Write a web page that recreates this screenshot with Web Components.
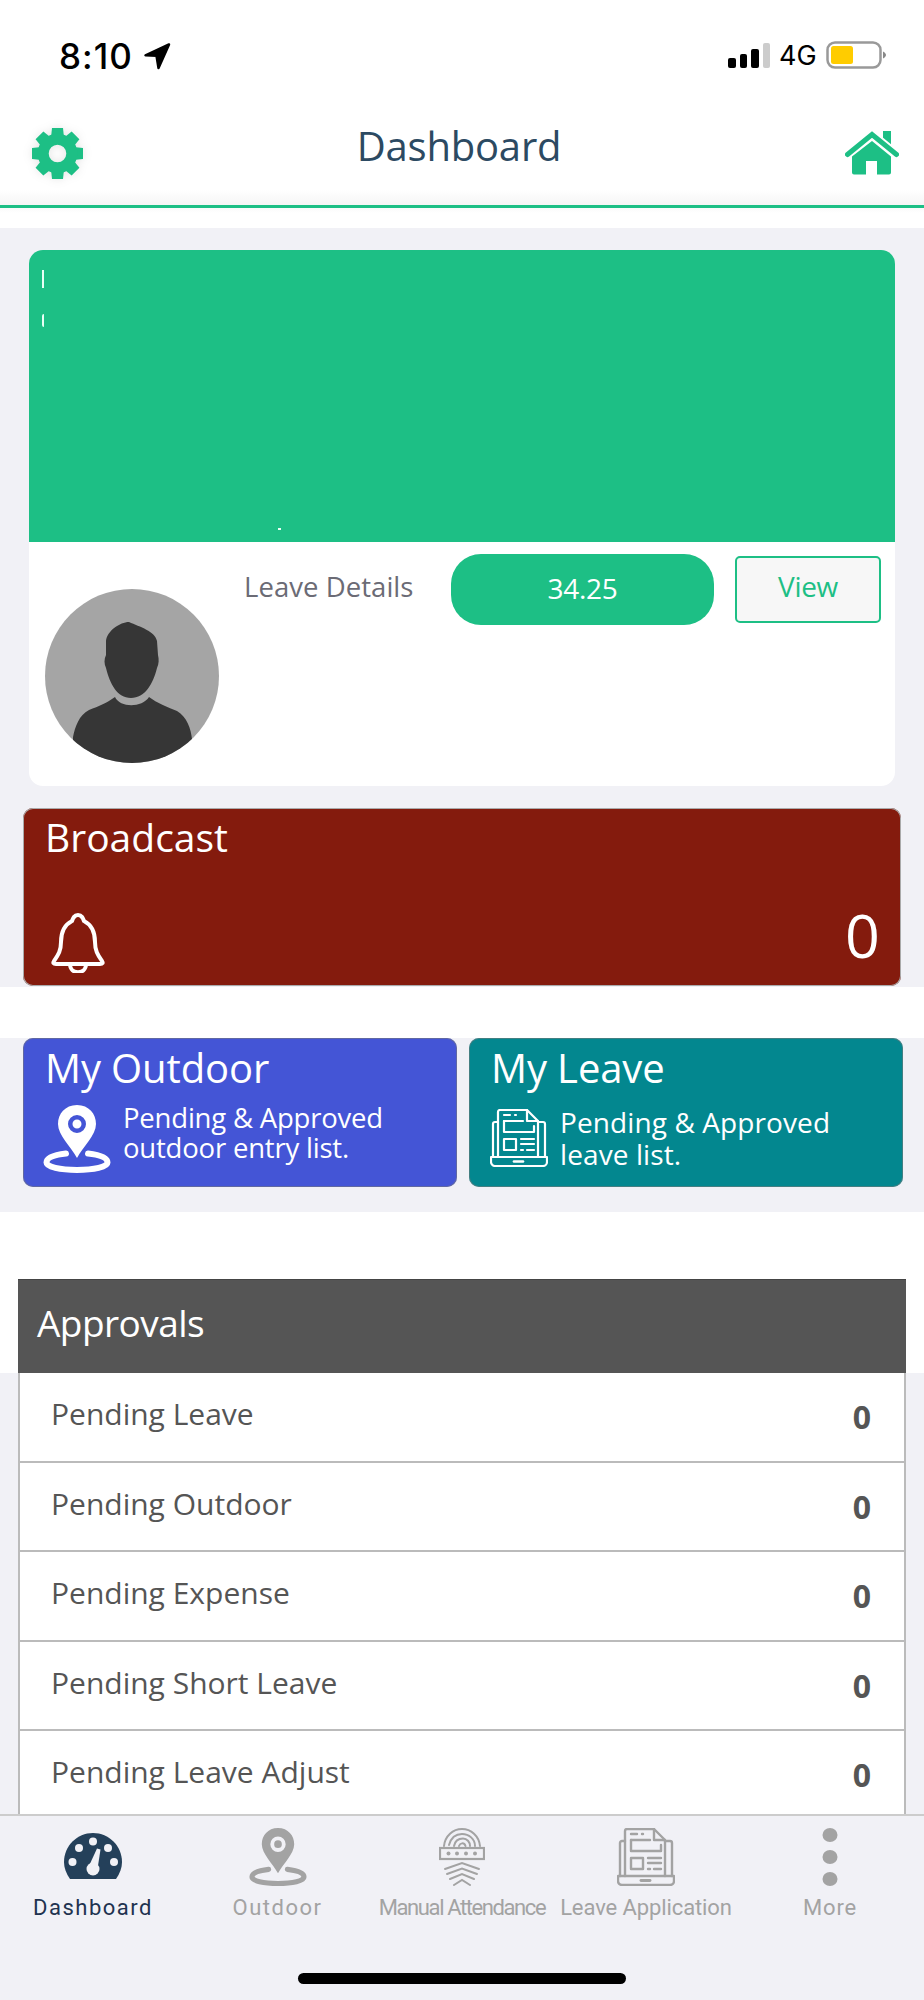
<!DOCTYPE html>
<html lang="en"><head><meta charset="utf-8"><title>Dashboard</title>
<style>
html,body{margin:0;padding:0;background:#fff}
body{width:924px;height:2000px;overflow:hidden;font-family:"Open Sans","Liberation Sans",sans-serif}
dash-screen{--green:#1dbf85;--lav:#f1f1f6}
</style></head><body>
<dash-screen>
  <status-bar slot="top" time="8:10" net="4G"></status-bar>
  <app-header slot="top" title="Dashboard"></app-header>
  <profile-card slot="first" leave="34.25"></profile-card>
  <broadcast-card slot="first" count="0"></broadcast-card>
  <quick-card slot="quick" kind="outdoor" heading="My Outdoor">Pending &amp; Approved<br>outdoor entry list.</quick-card>
  <quick-card slot="quick" kind="leave" heading="My Leave">Pending &amp; Approved<br>leave list.</quick-card>
  <approvals-list slot="approvals" heading="Approvals">
    <approval-row label="Pending Leave" value="0"></approval-row>
    <approval-row label="Pending Outdoor" value="0"></approval-row>
    <approval-row label="Pending Expense" value="0"></approval-row>
    <approval-row label="Pending Short Leave" value="0"></approval-row>
    <approval-row label="Pending Leave Adjust" value="0"></approval-row>
  </approvals-list>
  <tab-bar slot="tabs"></tab-bar>
</dash-screen>
<script>
const ICONS = {
  pin:(c)=>`<svg viewBox="0 0 68 68" width="100%" height="100%" fill="none"><path fill="${c}" fill-rule="evenodd" d="M34 0C22 0 15 9 15 19C15 30 28 42 34 53C40 42 53 30 53 19C53 9 46 0 34 0ZM34 10A9 9 0 1 1 34 28A9 9 0 1 1 34 10ZM34 14.5A4.5 4.5 0 1 0 34 23.5A4.5 4.5 0 1 0 34 14.5Z"/><path stroke="${c}" stroke-width="6" stroke-linecap="round" d="M23 48.5C10 50 3.5 53 3.5 57.5C3.5 62 17 65 34 65C51 65 64.5 62 64.5 57.5C64.5 53 58 50 45 48.5"/></svg>`,
  doc:(c,w=2.2)=>`<svg viewBox="0 0 58 58" width="100%" height="100%" fill="none" stroke="${c}" stroke-width="${w}" stroke-linejoin="round" stroke-linecap="round"><path d="M8 48V3a2 2 0 0 1 2-2H37L48 12V48"/><path d="M37 1V12H48"/><path d="M8 13H5a2 2 0 0 0-2 2V48M48 13H53a2 2 0 0 1 2 2V48"/><path d="M1 48H57V53a4 4 0 0 1-4 4H5a4 4 0 0 1-4-4Z"/><path d="M24 52.5H33" stroke-width="${w*1.2}"/><path d="M14 6H20M25 6H26"/><path d="M14 12V23H44V17"/><path d="M14 12H33"/><rect x="14" y="30" width="12" height="11"/><path d="M31 30H44M31 35H44M31 41H33M37 41H44"/></svg>`
};
function def(name, render){
  customElements.define(name, class extends HTMLElement{
    constructor(){super();this.attachShadow({mode:'open'});}
    connectedCallback(){this.shadowRoot.innerHTML=render(this);}
  });
}
def('dash-screen',()=>`<style>
:host{display:flex;flex-direction:column;width:924px;height:2000px;background:#fff;overflow:hidden}
main{flex:1;min-height:0;overflow:hidden;display:flex;flex-direction:column}
.first{background:var(--lav);padding:22px 0 1px;display:flex;flex-direction:column;gap:22px;margin-bottom:51px}
.quick{background:var(--lav);padding:0 20px 25px 23px;display:grid;grid-template-columns:434px 434px;gap:12px;margin-bottom:67px}
.appr{background:linear-gradient(#fff 0,#fff 94px,var(--lav) 94px);flex:1;padding:0 18px 0 18px}
</style><slot name="top"></slot><main><div class="first"><slot name="first"></slot></div><div class="quick"><slot name="quick"></slot></div><div class="appr"><slot name="approvals"></slot></div></main><slot name="tabs"></slot>`);

def('status-bar',el=>`<style>
:host{display:flex;height:90px;box-sizing:border-box;padding:0 38px 0 59px;align-items:flex-start;justify-content:space-between;background:#fff;color:#000}
.l,.r{display:flex;align-items:flex-start}
.t{font:500 35px/38px Inter,sans-serif;margin-top:37px;letter-spacing:1px;width:83px}
.arrow{margin-top:41px}
.bars{display:flex;align-items:flex-end;gap:4px;height:25px;margin-top:43px}
.bars i{display:block;width:7.5px;border-radius:2px;background:#000}
.n{font:400 27px/32px Inter,sans-serif;margin:40px 0 0 9px;width:47px}
.bat{margin-top:41px}
</style><div class="l"><span class="t">${el.getAttribute('time')}</span>
<svg class="arrow" width="30" height="30" viewBox="0 0 30 30"><path d="M27 3.5L3.5 14.3L14.5 14.7L16.5 27Z" fill="#000" stroke="#000" stroke-width="2.5" stroke-linejoin="round"/></svg></div>
<div class="r"><div class="bars"><i style="height:10px"></i><i style="height:14px"></i><i style="height:19px"></i><i style="height:25px;background:#ccc"></i></div><span class="n">${el.getAttribute('net')}</span>
<svg class="bat" width="60" height="28" viewBox="0 0 60 28"><rect x="1.5" y="1.5" width="53" height="25" rx="7.5" fill="none" stroke="#999" stroke-width="2.5"/><rect x="5" y="5" width="22" height="18" rx="2.5" fill="#fc0"/><path d="M57 10.5C59 11.5 60 13 60 14C60 15 59 16.5 57 17.5Z" fill="#888"/></svg></div>`);

def('app-header',el=>`<style>
:host{display:block;background:#fff}
.bar{height:115px;box-sizing:border-box;display:flex;align-items:center;justify-content:space-between;padding:0 25px 0 30px;background:linear-gradient(#fff 0,#fff 100px,#f5f5f5 115px)}
h1{margin:-4px 0 0;font:400 40px/50px "Open Sans",sans-serif;letter-spacing:-.2px;color:#2c4a62;position:relative;left:-6px}
.gear{filter:drop-shadow(0 0 5px rgba(0,0,0,.1));margin-top:11px}
.home{margin-top:12px}
.line{height:3px;background:var(--green)}
.gap{height:20px;background:linear-gradient(#fafafa,#fff 5px)}
</style><div class="bar">
<svg class="gear" width="55" height="55" viewBox="-27.5 -27.5 55 55"><g fill="#1dbf85">${[0,45,90,135,180,225,270,315].map(a=>`<path transform="rotate(${a})" d="M-5.5 -25.5H5.5L6.5 -16H-6.5Z"/>`).join('')}</g><circle r="14.3" fill="none" stroke="#1dbf85" stroke-width="11"/></svg>
<h1>${el.getAttribute('title')}</h1>
<svg class="home" width="54" height="45" viewBox="0 0 54 45"><rect x="38" y="0" width="8" height="14" fill="#1dbf85"/><path d="M2.5 23.5L27 3.5L51.5 23.5" fill="none" stroke="#fff" stroke-width="9"/><path d="M2.5 23.5L27 3.5L51.5 23.5" fill="none" stroke="#1dbf85" stroke-width="5" stroke-linecap="round"/><path d="M27 10L46 25.5V41.5a2 2 0 0 1-2 2H32V30H21V43.5H9a2 2 0 0 1-2-2V25.5Z" fill="#1dbf85"/></svg>
</div><div class="line"></div><div class="gap"></div>`);

def('profile-card',el=>`<style>
:host{display:block;margin:0 29px 0 29px;height:536px;background:#fff;border-radius:14px;overflow:hidden}
.band{height:292px;background:var(--green);position:relative}
.band i{position:absolute;background:#e8fff5;display:block}
.row{display:flex;align-items:flex-start;padding:12px 14px 0 16px}
.av{width:174px;height:174px;margin-top:35px;flex:none}
.ld{font:400 27.5px/36px "Open Sans",sans-serif;letter-spacing:.05px;color:#6b6b75;margin:15px 0 0 25px;width:207px;white-space:nowrap}
.pill{flex:none;width:263px;height:71px;border-radius:30px;background:var(--green);color:#fff;font:400 28px/68px "Open Sans",sans-serif;letter-spacing:-.3px;text-align:center}
.btn{flex:none;box-sizing:border-box;width:146px;height:67px;margin:2px 0 0 21px;background:#f7f7f7;border:2px solid var(--green);border-radius:5px;color:var(--green);font:400 28px/56px "Open Sans",sans-serif;letter-spacing:-.3px;text-align:center}
</style><div class="band"><i style="left:13px;top:20px;width:2px;height:18px"></i><i style="left:13px;top:64px;width:2px;height:13px;border-radius:2px 0 0 2px"></i><i style="left:249px;top:278px;width:3px;height:2px"></i></div>
<div class="row"><svg class="av" viewBox="0 0 174 174"><defs><clipPath id="c"><circle cx="87" cy="87" r="87"/></clipPath></defs><circle cx="87" cy="87" r="87" fill="#a5a5a5"/><g clip-path="url(#c)" fill="#363636"><path d="M84 33C75 33 62 42 61 52L61 66C59 70 59 75 61 79C65 95 72 109 86 109C100 109 108 95 112 79C114 75 114 70 113 66L112 52C110 42 95 38 84 33Z"/><path d="M70 108C75 119 97 119 104 108C112 114 122 118 132 122C142 128 146 140 147 150V174H28V148C30 138 34 126 44 121C54 117 62 114 70 108Z"/></g></svg>
<span class="ld">Leave Details</span><span class="pill">${el.getAttribute('leave')}</span><span class="btn">View</span></div>`);

def('broadcast-card',el=>`<style>
:host{display:block;margin:0 23px;height:178px;box-sizing:border-box;background:#841b0d;border-radius:10px;box-shadow:0 0 0 1px #aaa inset;color:#fff;padding:0 21px 0 22px}
h2{margin:0;font:400 39px/50px "Open Sans",sans-serif;padding-top:4px;height:89px}
.b{display:flex;justify-content:space-between;align-items:flex-start}
svg{margin:12px 0 0 6px}
span{font:400 61px/70px "Open Sans",sans-serif;margin-top:-1px}
</style><h2>Broadcast</h2><div class="b"><svg width="54" height="60" viewBox="0 0 54 60" fill="none" stroke="#fff" stroke-width="4" stroke-linejoin="round"><path d="M27 2C23 2 22 5 21 8C13 12 10 20 10 29C10 38 7 42 3 48Q1 51 5 51H49Q53 51 51 48C47 42 44 38 44 29C44 20 41 12 33 8C32 5 31 2 27 2Z"/><path d="M19 51C19 62 35 62 35 51"/></svg><span>${el.getAttribute('count')}</span></div>`);

def('quick-card',el=>{const leave=el.getAttribute('kind')==='leave';return `<style>
:host{display:block;height:149px;box-sizing:border-box;border-radius:10px;background:${leave?'#03878f':'#4455d6'};box-shadow:0 0 0 1px rgba(120,120,120,.55) inset;color:#fff;padding:0 0 0 22px}
h2{margin:0;font:400 40px/50px "Open Sans",sans-serif;letter-spacing:-.1px;padding-top:5px;height:${leave?66:62}px}
.b{display:flex;align-items:flex-start}
.ic{flex:none;width:${leave?58:68}px;height:${leave?58:68}px;margin-left:${leave?-1:-2}px}
p{margin:${leave?-3:-2}px 0 0 ${leave?12:12}px;font:400 ${leave?28:27.5}px/${leave?32:30}px "Open Sans",sans-serif;letter-spacing:${leave?.1:-.2}px;white-space:nowrap}
</style><h2>${el.getAttribute('heading')}</h2><div class="b"><div class="ic">${leave?ICONS.doc('#fff'):ICONS.pin('#fff')}</div><p><slot></slot></p></div>`});

def('approvals-list',el=>`<style>
:host{display:block}
h2{margin:0;height:94px;box-sizing:border-box;background:#555;color:#fff;border-top:1px solid #444;font:400 37px/85px "Open Sans",sans-serif;letter-spacing:-.55px;padding-left:19px}
.l{border-left:2px solid #bbb;border-right:2px solid #bbb;background:#fff}
</style><h2>${el.getAttribute('heading')}</h2><div class="l"><slot></slot></div>`);

def('approval-row',el=>`<style>
:host{display:flex;height:89.5px;box-sizing:border-box;border-bottom:2px solid #bbb;justify-content:space-between;padding:0 33px 5px 31px;align-items:center;color:#555;background:#fff}
.a{font:400 30px/40px "Open Sans",sans-serif}
.v{font:700 32px/40px "Open Sans",sans-serif;margin-top:6px}
</style><span class="a">${el.getAttribute('label')}</span><span class="v">${el.getAttribute('value')}</span>`);

const GREY='#a3a3a3';
const TABS=[
 {t:'Dashboard',on:1,ls:'1.5px',svg:`<svg width="58" height="46" viewBox="0 0 58 46" style="margin-top:5px"><path fill="#24405a" d="M6 46C2 40 0 35 0 29C0 13 13 0 29 0C45 0 58 13 58 29C58 35 56 40 52 46Z"/><g fill="#f1f1f6"><circle cx="8.5" cy="29" r="4"/><circle cx="15" cy="15" r="4"/><circle cx="29" cy="8.5" r="4"/><circle cx="44" cy="15" r="4"/><circle cx="50" cy="29" r="4"/><circle cx="29" cy="36" r="6.5"/><path d="M24.5 34L33 15.5L36.5 16.5L33.5 36Z"/></g></svg>`},
 {t:'Outdoor',ls:'1.5px',svg:`<div style="width:58px;height:58px">${ICONS.pin(GREY)}</div>`},
 {t:'Manual Attendance',ls:'-1.4px',svg:`<svg width="46" height="58" viewBox="0 0 46 58" fill="none" stroke="${GREY}" stroke-width="2" stroke-linecap="round"><path d="M5 18C6 8 14 1 23 1C32 1 40 8 41 18"/><path d="M10 17C12 10 17 6 23 6C30 6 36 11 36 18"/><path d="M15 18C16 13 19 10.5 24 10.5C28 10.5 31 14 31 18"/><path d="M20 18C21 15 25 14 26.5 18"/><rect x="1" y="20" width="44" height="11" stroke-width="2.2"/><g fill="${GREY}" stroke="none"><circle cx="9.5" cy="25.5" r="2"/><circle cx="18" cy="25.5" r="2"/><circle cx="27" cy="25.5" r="2"/><circle cx="36" cy="25.5" r="2"/></g><path d="M6 41L23 35L40 41"/><path d="M8 46L23 40.5L38 46"/><path d="M11 51L23 46L35 51"/><path d="M15 57L23 52L31 57"/></svg>`},
 {t:'Leave Application',ls:'-.1px',svg:`<div style="width:58px;height:58px">${ICONS.doc(GREY,2.4)}</div>`},
 {t:'More',ls:'.8px',svg:`<svg width="16" height="58" viewBox="0 0 16 58" fill="${GREY}"><ellipse cx="8" cy="7" rx="7.5" ry="7"/><ellipse cx="8" cy="29" rx="7.5" ry="7"/><ellipse cx="8" cy="51" rx="7.5" ry="7"/></svg>`}
];
def('tab-bar',()=>`<style>
:host{display:block;height:186px;box-sizing:border-box;background:var(--lav);border-top:2px solid #ccc;flex:none}
.t{display:grid;grid-template-columns:184px 185px 184px 184px 184px;padding:12px 0 0 1px}
.i{display:flex;flex-direction:column;align-items:center;height:98px}
.ic{height:58px;display:flex;align-items:flex-start;justify-content:center}
.l{margin-top:8px;font:400 22px/28px Roboto,sans-serif;color:#a3a3a3;white-space:nowrap}
.on .l{color:#1f3350}
.h{width:328px;height:11px;border-radius:6px;background:#000;margin:47px auto 0}
</style><div class="t">${TABS.map(x=>`<div class="i ${x.on?'on':''}"><div class="ic">${x.svg}</div><span class="l" style="letter-spacing:${x.ls}">${x.t}</span></div>`).join('')}</div><div class="h"></div>`);
</script>
</body></html>
